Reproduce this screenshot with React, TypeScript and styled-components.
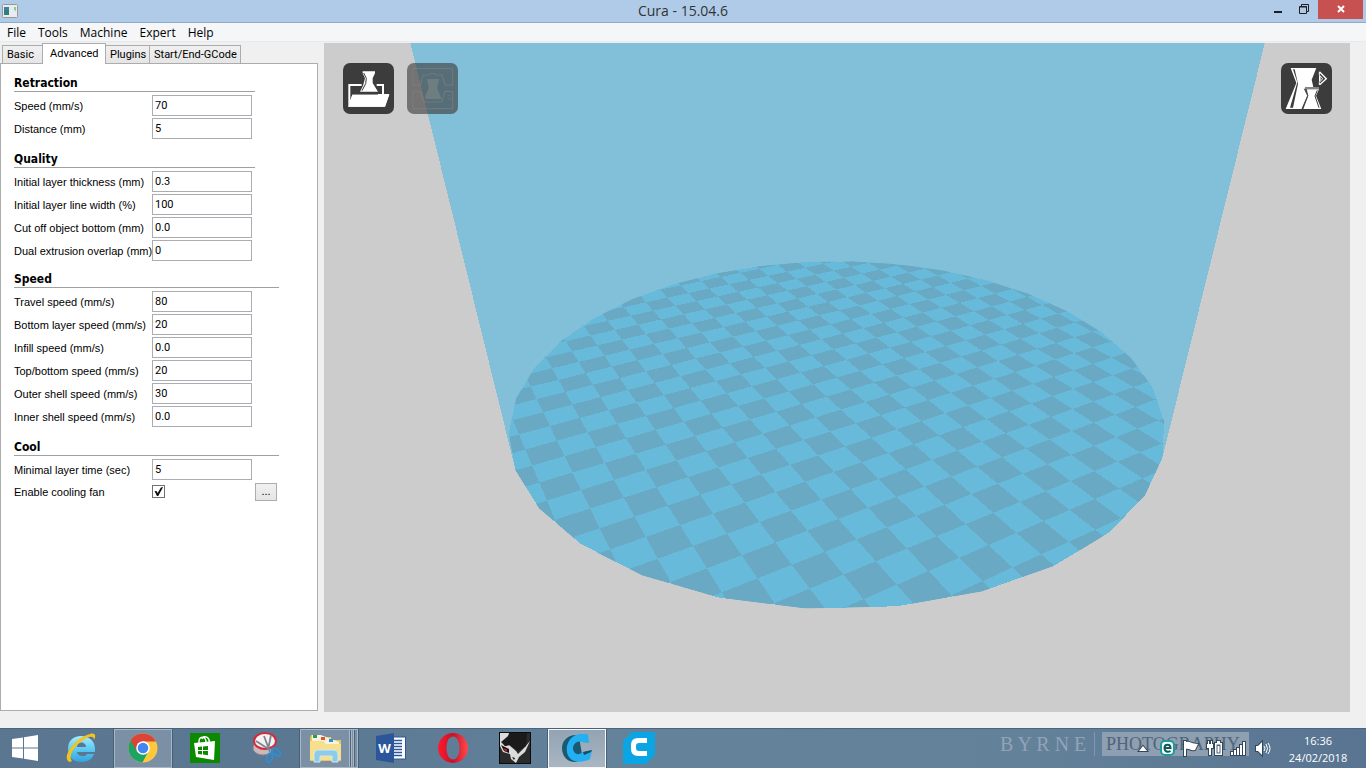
import React, { useId, useState } from "react";
import styled, { createGlobalStyle } from "styled-components";

const GlobalStyle = createGlobalStyle`
  *, *::before, *::after { box-sizing: border-box; }
  body { margin: 0; background: #f0f0f0; }
  button, input { font: inherit; color: inherit; }
`;

const uiFont = `"Open Sans", "Noto Sans", sans-serif`;
const tabFont = `Roboto, "Noto Sans", sans-serif`;
const formFont = `"Liberation Sans", Arial, sans-serif`;
const headingFont = `"DejaVu Sans Condensed", "DejaVu Sans", sans-serif`;

/* ---------- window frame ---------- */

const Desktop = styled.div`
  display: flex;
  flex-direction: column;
  min-height: 100vh;
  font-family: ${uiFont};
  font-size: 12px;
  color: #000;
  background: #f0f0f0;
`;

const TitleBar = styled.header`
  display: grid;
  grid-template-columns: 1fr auto 1fr;
  height: 23px;
  background: #b0cbe8;
  border-bottom: 1px solid #8fa9c6;
`;

const AppIcon = styled.svg`
  display: block;
  width: 16px;
  height: 14px;
  margin: 4px 0 0 2px;
`;

const WindowTitle = styled.h1`
  margin: 0;
  font-size: 14px;
  font-weight: 400;
  line-height: 22px;
  color: #333;
`;

const WindowButtons = styled.div`
  display: flex;
  justify-content: flex-end;
  align-items: flex-start;
  padding-right: 3px;
`;

const WindowButton = styled.button<{ $close?: boolean }>`
  width: ${(p) => (p.$close ? 45 : 27)}px;
  height: 19px;
  padding: 0;
  border: 0;
  background: ${(p) => (p.$close ? "#c75050" : "transparent")};

  svg {
    display: block;
    margin: 0 auto;
  }
`;

const MenuBar = styled.nav`
  display: flex;
  gap: 12px;
  height: 19px;
  padding-left: 7px;
  background: #f5f6f8;
  border-bottom: 1px solid #e8e9ec;
`;

const MenuItem = styled.button`
  padding: 1px 0 0;
  border: 0;
  background: none;
  line-height: 18px;
`;

const Workspace = styled.main`
  display: flex;
  flex: 1;
  gap: 6px;
  padding: 1px 16px 16px 0;
`;

/* ---------- settings panel ---------- */

const SettingsPane = styled.section`
  display: flex;
  flex-direction: column;
  flex: none;
  width: 318px;
  padding-bottom: 1px;
`;

const TabStrip = styled.div`
  display: flex;
  align-items: flex-end;
  height: 20px;
  padding-left: 2px;
`;

const Tab = styled.button<{ $active?: boolean; $width: number }>`
  position: relative;
  flex: none;
  width: ${(p) => p.$width}px;
  height: ${(p) => (p.$active ? 21 : 18)}px;
  margin-bottom: ${(p) => (p.$active ? -1 : 0)}px;
  margin-right: -1px;
  padding: 0 0 0 ${(p) => (p.$active ? 7 : 4)}px;
  border: 1px solid #acacac;
  border-bottom: 0;
  background: ${(p) => (p.$active ? "#fff" : "linear-gradient(#f0f0f0, #e5e5e5)")};
  z-index: ${(p) => (p.$active ? 1 : 0)};
  font-family: ${tabFont};
  font-size: 11px;
  line-height: 18px;
  text-align: left;
  white-space: nowrap;
`;

const TabPanel = styled.form`
  display: flex;
  flex-direction: column;
  flex: 1;
  gap: 7px;
  padding: 8px 12px 12px;
  border: 1px solid #acacac;
  background: #fff;
  font-family: ${formFont};
  font-size: 11px;
`;

const Group = styled.div<{ $width: number }>`
  display: flex;
  flex-direction: column;
  gap: 9px;
  width: ${(p) => p.$width}px;
  margin-left: 1px;
`;

const Section = styled.fieldset`
  display: flex;
  flex-direction: column;
  gap: 2px;
  min-width: 0;
  margin: 0;
  padding: 0;
  border: 0;
`;

const Heading = styled.legend`
  width: 100%;
  height: 20px;
  margin-bottom: 3px;
  padding: 2px 0 0;
  border-bottom: 1px solid #a0a0a0;
  font-family: ${headingFont};
  font-size: 12px;
  font-weight: 700;
  line-height: 19px;
`;

const Row = styled.div`
  display: grid;
  grid-template-columns: 138px 100px;
  align-items: center;
  height: 21px;
`;

const CheckRow = styled(Row)`
  grid-template-columns: 138px 103px 22px;
  height: 19px;
`;

const Label = styled.label`
  line-height: 17px;
  padding-top: 2px;
  white-space: nowrap;
`;

const TextBox = styled.input`
  width: 100%;
  height: 21px;
  padding: 0 2px 1px;
  border: 1px solid #abadb3;
  border-radius: 0;
  background: #fff;
  font-family: ${tabFont};
`;

const TickBox = styled.input`
  appearance: none;
  width: 13px;
  height: 13px;
  margin: 0;
  border: 1px solid #707070;
  background: #fff;

  &:checked::before {
    content: "";
    display: block;
    width: 11px;
    height: 11px;
    background: #111;
    clip-path: polygon(14% 46%, 32% 46%, 42% 64%, 72% 14%, 92% 10%, 48% 92%, 36% 92%);
  }
`;

const MoreButton = styled.button`
  width: 22px;
  height: 18px;
  padding: 0;
  border: 1px solid #acacac;
  background: linear-gradient(#f0f0f0, #e5e5e5);
  line-height: 15px;
`;

type Setting = { label: string; value: string };

function Settings({ title, items, children }: { title: string; items: Setting[]; children?: React.ReactNode }) {
  const id = useId();
  return (
    <Section>
      <Heading>{title}</Heading>
      {items.map((s, i) => (
        <Row key={s.label}>
          <Label htmlFor={id + i}>{s.label}</Label>
          <TextBox id={id + i} type="text" defaultValue={s.value} />
        </Row>
      ))}
      {children}
    </Section>
  );
}

/* ---------- 3D view ---------- */

const View = styled.section`
  position: relative;
  flex: 1;
  min-width: 0;
  overflow: hidden;
  background: #ccc;
`;

const Scene = styled.svg`
  position: absolute;
  inset: 0;
  width: 100%;
  height: 100%;
`;

const ViewTools = styled.div`
  position: absolute;
  inset: 20px 18px auto 19px;
  display: flex;
  gap: 13px;
`;

const ViewButton = styled.button<{ $right?: boolean; $faded?: boolean }>`
  width: 51px;
  height: 51px;
  margin-left: ${(p) => (p.$right ? "auto" : 0)};
  padding: 0;
  border: 0;
  border-radius: 7px;
  background: ${(p) => (p.$faded ? "rgba(60, 60, 60, 0.62)" : "#3c3c3c")};

  svg {
    display: block;
    width: 51px;
    height: 51px;
  }
`;

const FOCAL = 334.5 / Math.tan(Math.PI / 8);
const DISTANCE = 300;
const RADIUS = 115;
const CELL = 10;
const SIDES = 32;
const TILT = Math.PI / 3;
const TURN = Math.PI / 6;

/* Projects a point of the build volume (mm) to view coordinates. */
function project(x: number, y: number, z = 0): [number, number] {
  const gx = x * Math.cos(TURN) - y * Math.sin(TURN);
  const gy = x * Math.sin(TURN) + y * Math.cos(TURN);
  const up = gy * Math.cos(TILT) + z * Math.sin(TILT);
  const depth = DISTANCE + gy * Math.sin(TILT) - z * Math.cos(TILT);
  return [(gx * FOCAL) / depth, (-up * FOCAL) / depth];
}

const toPoints = (pts: [number, number][]) => pts.map((p) => p.map((n) => n.toFixed(2)).join(",")).join(" ");

const rim = (i: number, z = 0) => {
  const a = (i / SIDES) * Math.PI * 2;
  return project(Math.cos(a) * RADIUS, Math.sin(a) * RADIUS, z);
};

const bed = toPoints(Array.from({ length: SIDES }, (_, i) => rim(i)));

const wall = toPoints([rim(16, 130), rim(16), rim(15), rim(8), rim(0), rim(28), rim(27), rim(27, 150)]);

const tiles: string[] = [];
for (let i = -12; i < 12; i++) {
  for (let j = -12; j < 12; j++) {
    if ((i + j) % 2 === 0) continue;
    const x = i * CELL;
    const y = j * CELL;
    tiles.push(
      "M" + toPoints([project(x, y), project(x + CELL, y), project(x + CELL, y + CELL), project(x, y + CELL)]) + "Z"
    );
  }
}

function BuildPlate() {
  return (
    <Scene viewBox="-513 -334.5 1026 669" preserveAspectRatio="xMidYMid slice" shapeRendering="crispEdges" aria-hidden="true">
      <clipPath id="bed">
        <polygon points={bed} />
      </clipPath>
      <polygon points={wall} fill="#82bfd8" />
      <polygon points={bed} fill="#68bada" />
      <path d={tiles.join("")} fill="#69a9c3" clipPath="url(#bed)" />
    </Scene>
  );
}

const LoadIcon = () => (
  <svg viewBox="0 0 153 153" fill="#fff">
    <path d="M16 131V63H58V69H22V112L28 95H101L104 98V93H117V69H101V63H123V93H139L126 131Z" />
    <path d="M50 63H104V92H50Z" fill="#3c3c3c" />
    <path d="M44 63H56V69H44Z" />
    <path d="M59 25H96V31L89 46V60L105 86H51L60 68L66 46L59 31Z" />
    <path d="M62 30L70 46L68 62L57 83" fill="none" stroke="#3c3c3c" strokeWidth="3" />
    <path d="M28 95H139L126 131H16Z" />
    <path d="M101 63H123V95H117V69H101Z" />
  </svg>
);

const SaveIcon = () => (
  <svg viewBox="0 0 153 153" fill="none" stroke="#93817f" strokeOpacity="0.55" strokeWidth="3">
    <path d="M18 66V16H137V66H114L105 36H88L84 32H70L66 36H48L41 66Z" />
    <path d="M18 85H40L49 117H104L114 85H137V137H18Z" />
    <path d="M62 48H97L90 74L104 108H54L66 74Z" fill="#93948f" fillOpacity="0.4" stroke="none" />
    <path d="M62 50L68 74L55 104M123 98H129M123 108H129" />
  </svg>
);

const ViewModeIcon = () => (
  <svg viewBox="0 0 153 153" fill="#fff">
    <path d="M29 15H106L92 50L97 72H72V79L80 98L63 138H14L46 60Z" />
    <path d="M36 19L49 58L27 134H36L51 62L41 19Z" fill="#3c3c3c" />
    <path d="M77 79H114L105 98L121 138H67L82 98Z" />
    <path d="M70 77L80 98L63 138" fill="none" stroke="#3c3c3c" strokeWidth="3" />
    <path d="M72 75H114" stroke="#aaa" strokeWidth="4" />
    <path d="M109 82L102 99L114 134" fill="none" stroke="#3c3c3c" strokeWidth="3" />
    <path d="M116 27L136 47L116 65" fill="none" stroke="#fff" strokeWidth="4" />
    <path d="M115 26V36L125 47L115 58V66" fill="none" stroke="#fff" strokeWidth="3" />
    <path d="M114 37C121 42 121 52 114 57Z" />
  </svg>
);

/* ---------- task bar ---------- */

const TaskBar = styled.footer`
  display: flex;
  height: 40px;
  background: linear-gradient(90deg, #5a7691 0%, #5b7893 22%, #65829b 45%, #64819a 75%, #587491 100%);
  border-top: 1px solid #4b657f;
  color: #fff;
`;

const StartButton = styled.button`
  width: 52px;
  padding: 0;
  border: 0;
  background: none;

  svg {
    display: block;
    margin: -2px 0 0 11px;
  }
`;

const Apps = styled.div`
  display: flex;
  gap: 4px;
`;

const AppButton = styled.button<{ $state?: "open" | "active" }>`
  display: flex;
  align-items: center;
  justify-content: center;
  width: 58px;
  height: 39px;
  padding: 0 0 1px;
  border: ${(p) => (p.$state ? 1 : 0)}px solid ${(p) => (p.$state === "active" ? "#f4f6f8" : "#a9b7c5")};
  outline: ${(p) => (p.$state ? 1 : 0)}px solid #48617a;
  outline-offset: 0;
  background: ${(p) =>
    p.$state === "active" ? "linear-gradient(#93a3b3, #a9b6c2)" : p.$state === "open" ? "#7b90a5" : "none"};
`;

const StackedButton = styled(AppButton)`
  justify-content: flex-start;
  padding-left: 8px;
  background: linear-gradient(90deg, #7b90a5 0 48px, #a9b7c5 48px 49px, #4c657e 49px 50px, #a9b7c5 50px 51px, #7b90a5 51px 52px, #a9b7c5 52px 53px, #4c657e 53px 54px, #7b90a5 54px);
`;

const Tray = styled.div`
  display: grid;
  align-items: start;
  margin-left: auto;
  width: 275px;
`;

const Watermark = styled.div`
  grid-area: 1 / 1;
  display: flex;
  align-items: center;
  padding-top: 3px;
  color: #90a4b6;
  font-family: "Liberation Serif", serif;
  font-size: 20px;
  line-height: 24px;
  white-space: nowrap;
`;

const WatermarkFirst = styled.span`
  width: 95px;
  border-right: 1px solid #8297ab;
`;

const WatermarkSecond = styled.span`
  width: 147px;
  margin-left: 7px;
  padding-left: 4px;
  background: #8d9fb0;
  color: #4f6579;
  font-size: 18px;
`;

const TrayIcons = styled.div`
  grid-area: 1 / 1;
  display: flex;
  justify-content: flex-end;
  gap: 4px;
  padding: 9px 2px 0 0;

  button {
    width: 20px;
    height: 20px;
    padding: 0;
    border: 0;
    background: none;
  }

  svg {
    display: block;
  }
`;

const Clock = styled.time`
  width: 91px;
  padding: 3px 5px 0 0;
  font-size: 11px;
  text-align: center;
  line-height: 17px;
`;

const StartIcon = () => (
  <svg width="28" height="28" viewBox="0 0 28 28" fill="#fff">
    <path d="M1 5L12 3.500V13.500H1ZM13 3.300L27 1V13.500H13ZM1 14.500H12V24.500L1 23ZM13 14.500H27V27L13 24.800Z" />
  </svg>
);

const ExplorerIcon = () => (
  <svg width="32" height="32" viewBox="0 0 32 32">
    <defs>
      <linearGradient id="ie" x1="0" x2="0" y1="0" y2="1">
        <stop offset="0" stopColor="#a5ebfd" />
        <stop offset="0.5" stopColor="#5ccbf5" />
        <stop offset="1" stopColor="#35a3dc" />
      </linearGradient>
    </defs>
    <path
      fillRule="evenodd"
      fill="url(#ie)"
      d="M16 4C24 4 30 9 30 17V20H12C12 24 20 26 22 22H29C27 28 22 30 16 30C8 30 3 25 3 17S8 4 16 4ZM12 15H21C21 9 12 9 12 15Z"
    />
    <path d="M5 30C-4 28 7 7 25 2C31 0 31 5 29 8C29 3 23 4 17 9C8 15 3 25 7 29Z" fill="#f6c21c" />
  </svg>
);

const ChromeIcon = () => (
  <svg width="30" height="30" viewBox="0 0 30 30">
    <circle cx="15" cy="15" r="14.500" fill="#fbc93d" />
    <path d="M15 15L2.500 7.500A14.500 14.500 0 0 0 14.500 29.500L20.500 18Z" fill="#1ea362" />
    <path d="M2.500 7.500A14.500 14.500 0 0 1 28 8.500H15L9 18Z" fill="#db4437" />
    <circle cx="15" cy="15" r="6.800" fill="#fff" />
    <circle cx="15" cy="15" r="5.300" fill="#4285f4" />
  </svg>
);

const StoreIcon = () => (
  <svg width="30" height="30" viewBox="0 0 30 30">
    <path d="M0 0H30V30H0Z" fill="#0b8a00" />
    <path d="M9 10C8 2 16 3 16 9M12 6C14 1 20 5 19 9" fill="none" stroke="#fff" strokeWidth="1.500" />
    <path d="M4 10L25 8L24 27L6 24Z" fill="#fff" />
    <path d="M8 14L12 13.500V17H8ZM13 13.400L18 13V17H13ZM8 18H12V21.500L8 21ZM13 18H18V22.300L13 21.600Z" fill="#0b8a00" />
  </svg>
);

const ScissorsIcon = () => (
  <svg width="32" height="32" viewBox="0 0 32 32">
    <ellipse cx="12" cy="16" rx="10" ry="7" fill="#c9b9bd" stroke="#9b8187" strokeWidth="1" />
    <ellipse cx="14" cy="9" rx="11" ry="8" fill="#f6f2f3" stroke="#d32b3c" strokeWidth="2" />
    <path d="M5 9L19 18M13 4L19 20M20 3L17 18" stroke="#7a8590" strokeWidth="1.800" />
    <ellipse cx="25" cy="20" rx="5" ry="2.800" transform="rotate(35 25 20)" fill="none" stroke="#2a8fd6" strokeWidth="2" />
    <ellipse cx="18.500" cy="26" rx="2.800" ry="4.500" transform="rotate(15 18.500 26)" fill="none" stroke="#2a8fd6" strokeWidth="2" />
  </svg>
);

const FolderIcon = () => (
  <svg width="33" height="32" viewBox="0 0 33 32">
    <path d="M2 3H11L13 5H22L23 8H32V29H1V6Z" fill="#e8c65c" />
    <path d="M3 3H12L17 5L30 10V13H3Z" fill="#f7f3df" />
    <path d="M4 3H8V6H4Z" fill="#22a04a" />
    <path d="M12 5H16V8H12Z" fill="#e0552e" />
    <path d="M20 7H24V10H20Z" fill="#2a8fd6" />
    <path d="M1 9H14L17 12H32V28H1Z" fill="#f7df8d" />
    <path d="M5 30V22Q5 18 9 18H25Q29 18 29 22V30H23V24H11V30Z" fill="#8fcbe6" stroke="#c9eaf6" strokeWidth="1" />
  </svg>
);

const WordIcon = () => (
  <svg width="30" height="30" viewBox="0 0 30 30">
    <path d="M16 4H29.500V26H16Z" fill="#fff" stroke="#2b579a" strokeWidth="1" />
    <path d="M18 7.500H26M18 10.500H26M18 13.500H26M18 16.500H26M18 19.500H26M18 22.500H26" stroke="#2b579a" strokeWidth="1.500" />
    <path d="M0 3L18 0V30L0 27Z" fill="#2b579a" />
    <text x="8.500" y="20" textAnchor="middle" fill="#fff" fontFamily="Open Sans, sans-serif" fontWeight="700" fontSize="13">
      W
    </text>
  </svg>
);

const OperaIcon = () => (
  <svg width="30" height="30" viewBox="0 0 30 30">
    <defs>
      <linearGradient id="opera" x1="0" x2="1">
        <stop offset="0" stopColor="#ff1b2d" />
        <stop offset="0.500" stopColor="#c8102a" />
        <stop offset="1" stopColor="#ff4b4b" />
      </linearGradient>
    </defs>
    <path
      fillRule="evenodd"
      fill="url(#opera)"
      d="M15 0A15 15 0 1 1 15 30A15 15 0 1 1 15 0ZM15 3.500C11 3.500 8.500 8.500 8.500 15S11 26.500 15 26.500S21.500 21.500 21.500 15S19 3.500 15 3.500Z"
    />
  </svg>
);

const RhinoIcon = () => (
  <svg width="32" height="32" viewBox="0 0 32 32">
    <path d="M0 0H32V32H0Z" fill="#0c0c0c" />
    <path d="M1 1H31V31H1Z" fill="#2b2b2b" />
    <path d="M1 1H11L9 4L2 10L6 14L10 13L17 19L19 22L26 15L31 9L26 20L20 25L17 31L12 27L11 22L4 20L1 14Z" fill="#dcdcdc" />
    <path d="M10 1H28L27 14L19 19L11 13L6 14L3 10L9 5Z" fill="#1a1a1a" />
    <path d="M2 13L10 17V21L5 19Z" fill="#151515" />
    <path d="M5 16.500L8 17.500V19.500L5 18Z" fill="#c22" />
    <path d="M13 25L16 26L15 28Z" fill="#111" />
  </svg>
);

const CuraIcon = () => (
  <svg width="32" height="30" viewBox="0 0 32 30">
    <path d="M14 2C5 3 1 9 1 15C1 23 6 29 14 29L22 27L18 4Z" fill="#1b5872" />
    <path d="M27 1L28 10L21 9C15 7 12 12 12 16C13 21 17 23 22 19L31 17L29 26C22 30 12 30 8 24C3 16 7 5 15 2C19 0 23 2 27 1Z" fill="#22b0f2" />
    <path d="M22 19L31 17L30 19L23 22Z" fill="#174d66" />
  </svg>
);

const CuraModernIcon = () => (
  <svg width="32" height="32" viewBox="0 0 32 32">
    <path d="M9 0H32V23L23 32H0V9Z" fill="#0aa5e2" />
    <path d="M24 6V11H16Q13 11 13 14V16Q13 19 16 19H24V24H15Q8 24 8 17V13Q8 6 15 6Z" fill="#fff" />
  </svg>
);

const outlineProps = { fill: "#fff", stroke: "#33475a", strokeWidth: 2, paintOrder: "stroke" } as const;

const trayItems = [
  { name: "Show hidden icons", art: <path d="M6 13L10 8L14 13Z" {...outlineProps} /> },
  {
    name: "Security",
    art: (
      <>
        <rect x="4" y="3" width="13" height="14" rx="4" fill="#f2fffc" stroke="#1f9a98" strokeWidth="2" />
        <path d="M7.500 10H13.500C13.500 5.500 7.500 5.500 7.500 10C7.500 14 11 14.500 13.500 13" fill="none" stroke="#12565a" strokeWidth="2" />
      </>
    ),
  },
  { name: "Action centre", art: <path d="M3 3H5V4C9 3 10 6 17 6L14 12C10 13 8 10 5 11V18H3Z" {...outlineProps} /> },
  {
    name: "Power",
    art: (
      <>
        <path d="M3 3H4V6H6V3H7V6H8V10H6V17H4V10H2V6H3Z" {...outlineProps} />
        <path d="M10 5H12V3H15V5H17V17H10Z" {...outlineProps} />
        <path d="M11.500 6.500H15.500V15.500H11.500Z" fill="#4c6279" />
        <path d="M12.500 8H14.500V14.500H12.500Z" fill="#fff" />
      </>
    ),
  },
  {
    name: "Network",
    art: <path d="M2 14H4V17H2ZM5 12H7V17H5ZM8 10H10V17H8ZM11 7H13V17H11ZM14 4H16V17H14Z" {...outlineProps} />,
  },
  {
    name: "Volume",
    art: (
      <>
        <path d="M3 8H5L9 4V17L5 13H3Z" {...outlineProps} />
        <path d="M11 8Q13 10.500 11 13M13 6Q16 10.500 13 15M15 5Q19 10.500 15 16" fill="none" stroke="#fff" strokeWidth="1" />
      </>
    ),
  },
];

const apps: { name: string; art: React.ReactNode; state?: "open" | "active"; stacked?: boolean }[] = [
  { name: "Internet Explorer", art: <ExplorerIcon /> },
  { name: "Chrome", art: <ChromeIcon />, state: "open" },
  { name: "Store", art: <StoreIcon /> },
  { name: "Snipping Tool", art: <ScissorsIcon /> },
  { name: "File Explorer", art: <FolderIcon />, state: "open", stacked: true },
  { name: "Word", art: <WordIcon /> },
  { name: "Opera", art: <OperaIcon /> },
  { name: "Rhino", art: <RhinoIcon /> },
  { name: "Cura 15", art: <CuraIcon />, state: "active" },
  { name: "Cura", art: <CuraModernIcon /> },
];

const tabs = [
  { name: "Basic", width: 41 },
  { name: "Advanced", width: 64 },
  { name: "Plugins", width: 45 },
  { name: "Start/End-GCode", width: 92 },
];

export default function App() {
  const [fan, setFan] = useState(true);

  return (
    <Desktop>
      <GlobalStyle />
      <TitleBar>
        <AppIcon viewBox="0 0 16 14" aria-hidden="true">
          <rect x="0.500" y="0.500" width="15" height="13" rx="1" fill="#e9ecec" stroke="#999" />
          <path d="M2 3H7V11H2Z" fill="#2f7f7a" />
          <path d="M2 3H7V6H2Z" fill="#3f7ea8" />
          <path d="M12 3H14V7L12 6Z" fill="#8cc6a4" />
        </AppIcon>
        <WindowTitle>Cura - 15.04.6</WindowTitle>
        <WindowButtons>
          <WindowButton aria-label="Minimize">
            <svg width="20" height="19" viewBox="0 0 20 19">
              <path d="M6 11H14V13H6Z" fill="#1e1e1e" />
            </svg>
          </WindowButton>
          <WindowButton aria-label="Restore">
            <svg width="20" height="19" viewBox="0 0 20 19" fill="none" stroke="#1e1e1e">
              <path d="M4.500 7V13.500H11.500V6.500H4.500M4 7H12M6.500 6V4.500H13.500V11.500H12" />
            </svg>
          </WindowButton>
          <WindowButton $close aria-label="Close">
            <svg width="20" height="19" viewBox="0 0 20 19" stroke="#fff" strokeWidth="2">
              <path d="M7 6L13 12M13 6L7 12" />
            </svg>
          </WindowButton>
        </WindowButtons>
      </TitleBar>

      <MenuBar>
        {["File", "Tools", "Machine", "Expert", "Help"].map((m) => (
          <MenuItem key={m}>{m}</MenuItem>
        ))}
      </MenuBar>

      <Workspace>
        <SettingsPane>
          <TabStrip role="tablist">
            {tabs.map((t) => (
              <Tab key={t.name} role="tab" $width={t.width} $active={t.name === "Advanced"} aria-selected={t.name === "Advanced"}>
                {t.name}
              </Tab>
            ))}
          </TabStrip>
          <TabPanel role="tabpanel">
            <Group $width={241}>
              <Settings
                title="Retraction"
                items={[
                  { label: "Speed (mm/s)", value: "70" },
                  { label: "Distance (mm)", value: "5" },
                ]}
              />
              <Settings
                title="Quality"
                items={[
                  { label: "Initial layer thickness (mm)", value: "0.3" },
                  { label: "Initial layer line width (%)", value: "100" },
                  { label: "Cut off object bottom (mm)", value: "0.0" },
                  { label: "Dual extrusion overlap (mm)", value: "0" },
                ]}
              />
            </Group>
            <Group $width={265}>
              <Settings
                title="Speed"
                items={[
                  { label: "Travel speed (mm/s)", value: "80" },
                  { label: "Bottom layer speed (mm/s)", value: "20" },
                  { label: "Infill speed (mm/s)", value: "0.0" },
                  { label: "Top/bottom speed (mm/s)", value: "20" },
                  { label: "Outer shell speed (mm/s)", value: "30" },
                  { label: "Inner shell speed (mm/s)", value: "0.0" },
                ]}
              />
              <Settings title="Cool" items={[{ label: "Minimal layer time (sec)", value: "5" }]}>
                <CheckRow>
                  <Label htmlFor="fan">Enable cooling fan</Label>
                  <TickBox id="fan" type="checkbox" checked={fan} onChange={(e) => setFan(e.target.checked)} />
                  <MoreButton type="button">...</MoreButton>
                </CheckRow>
              </Settings>
            </Group>
          </TabPanel>
        </SettingsPane>

        <View>
          <BuildPlate />
          <ViewTools>
            <ViewButton aria-label="Load">
              <LoadIcon />
            </ViewButton>
            <ViewButton $faded aria-label="Save">
              <SaveIcon />
            </ViewButton>
            <ViewButton $right aria-label="View mode">
              <ViewModeIcon />
            </ViewButton>
          </ViewTools>
        </View>
      </Workspace>

      <TaskBar>
        <StartButton aria-label="Start">
          <StartIcon />
        </StartButton>
        <Apps>
          {apps.map((a) => {
            const Button = a.stacked ? StackedButton : AppButton;
            return (
              <Button key={a.name} $state={a.state} aria-label={a.name}>
                {a.art}
              </Button>
            );
          })}
        </Apps>
        <Tray>
          <Watermark>
            <WatermarkFirst>B Y R N E</WatermarkFirst>
            <WatermarkSecond>PHOTOGRAPHY</WatermarkSecond>
          </Watermark>
          <TrayIcons>
            {trayItems.map((t) => (
              <button key={t.name} aria-label={t.name}>
                <svg width="20" height="20" viewBox="0 0 20 20">
                  {t.art}
                </svg>
              </button>
            ))}
          </TrayIcons>
        </Tray>
        <Clock>
          16:36
          <br />
          24/02/2018
        </Clock>
      </TaskBar>
    </Desktop>
  );
}
